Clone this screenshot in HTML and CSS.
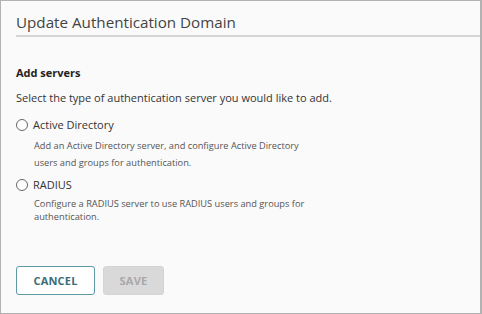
FILE: index.html
```html
<!DOCTYPE html>
<html>
<head>
<meta charset="utf-8">
<link rel="stylesheet" href="styles.css">
</head>
<body>
<div class="dialog">
  <h1 class="title">Update Authentication Domain</h1>
  <div class="content">
    <h2 class="section">Add servers</h2>
    <p class="intro">Select the type of authentication server you would like to add.</p>
    <label class="option">
      <span class="radio"></span>
      <span class="label">Active Directory</span>
    </label>
    <p class="desc">Add an Active Directory server, and configure Active Directory<br>users and groups for authentication.</p>
    <label class="option option-next">
      <span class="radio"></span>
      <span class="label">RADIUS</span>
    </label>
    <p class="desc desc2">Configure a RADIUS server to use RADIUS users and groups for<br>authentication.</p>
  </div>
  <div class="actions">
    <button class="btn btn-cancel">CANCEL</button>
    <button class="btn btn-save">SAVE</button>
  </div>
</div>
</body>
</html>
```
FILE: styles.css
```css
html, body {
  margin: 0;
  padding: 0;
}
body {
  width: 482px;
  height: 314px;
  font-family: "Open Sans", sans-serif;
  color: #333;
  background: #fafafa;
}
.dialog {
  box-sizing: border-box;
  width: 482px;
  height: 314px;
  border: 1px solid #b2b2b2;
  border-right-width: 2px;
  background: #fafafa;
  padding: 0 0 0 15px;
  display: flex;
  flex-direction: column;
}
.title {
  margin: 0;
  padding: 13px 0 4px 0;
  font-size: 15.2px;
  line-height: 17px;
  font-weight: 400;
  color: #444;
  border-bottom: 2px solid #d5d5d5;
}
.content {
  padding-top: 27px;
}
.section {
  margin: 0;
  font-size: 11px;
  font-weight: 700;
  line-height: 17px;
  color: #222;
}
.intro {
  margin: 8px 0 0 0;
  font-size: 11px;
  line-height: 17px;
  color: #333;
}
.option {
  display: flex;
  align-items: center;
  margin-top: 10px;
  height: 17px;
}
.option-next {
  margin-top: 5px;
}
.radio {
  box-sizing: border-box;
  width: 12px;
  height: 12px;
  border: 1px solid #666;
  border-radius: 50%;
  background: #fff;
  margin-right: 5px;
}
.label {
  font-size: 11px;
  color: #333;
}
.desc {
  margin: 4px 0 0 18px;
  font-size: 9.25px;
  line-height: 17px;
  color: #555;
}
.desc2 {
  line-height: 13px;
  margin-top: 4px;
}
.actions {
  margin-top: auto;
  margin-bottom: 18px;
  display: flex;
  gap: 8px;
}
.btn {
  font-family: "Open Sans", sans-serif;
  font-size: 11px;
  font-weight: 700;
  height: 29px;
  border-radius: 3px;
  padding: 0;
  letter-spacing: 0.2px;
}
.btn-cancel {
  width: 79px;
  background: #fff;
  border: 1px solid #5e9aa6;
  color: #3b6d78;
}
.btn-save {
  width: 61px;
  background: #d9d9d9;
  border: 1px solid #d4d4d4;
  color: #a8a8a8;
}
```
